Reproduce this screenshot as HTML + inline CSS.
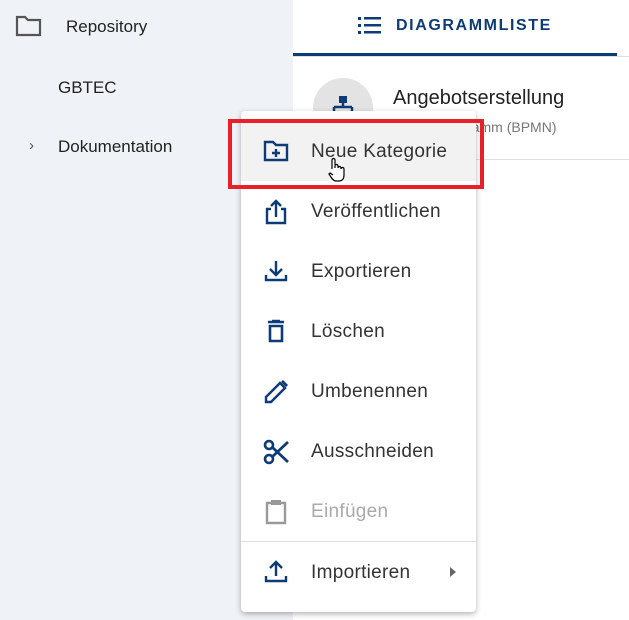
<!DOCTYPE html>
<html><head><meta charset="utf-8"><style>
*{margin:0;padding:0;box-sizing:border-box}
body{width:629px;height:620px;overflow:hidden;position:relative;background:#fff;font-family:"Liberation Sans",sans-serif;color:#222}
.side{position:absolute;left:0;top:0;width:293px;height:620px;background:#eff2f7}
.t{position:absolute;white-space:nowrap}
.menu{position:absolute;left:241px;top:111px;width:235px;height:501px;background:#fff;border-radius:4px;box-shadow:0 2px 6px rgba(0,0,0,.3)}
.item{position:absolute;left:0;width:235px;height:60px}
.item span{position:absolute;left:70px;top:19px;font-size:19px;line-height:24px;color:#333;letter-spacing:.3px}
.item svg{position:absolute;left:22px;top:18px}
</style></head><body>
<div class="side"></div>
<svg style="position:absolute;left:15px;top:15px" width="27" height="22" viewBox="0 0 27 22"><path d="M2 2h8l3 3h12v15H2z" fill="none" stroke="#555" stroke-width="2.2"/></svg>
<div class="t" style="left:66px;top:17px;font-size:17px;color:#222">Repository</div>
<div class="t" style="left:58px;top:78px;font-size:17px;color:#222">GBTEC</div>
<div class="t" style="left:29px;top:137px;font-size:15px;color:#555">›</div>
<div class="t" style="left:58px;top:137px;font-size:17px;color:#222">Dokumentation</div>

<svg style="position:absolute;left:358px;top:16px" width="24" height="20" viewBox="0 0 24 20"><g fill="#0d3b77"><rect x="0" y="1" width="3" height="3"/><rect x="0" y="8" width="3" height="3"/><rect x="0" y="15" width="3" height="3"/><rect x="6" y="1" width="17" height="2.5"/><rect x="6" y="8" width="17" height="2.5"/><rect x="6" y="15" width="17" height="2.5"/></g></svg>
<div class="t" style="left:396px;top:17px;font-size:16px;font-weight:bold;color:#0d3b77;letter-spacing:1.6px">DIAGRAMMLISTE</div>
<div style="position:absolute;left:293px;top:53px;width:324px;height:3px;background:#0d3b77"></div>
<div style="position:absolute;left:293px;top:56px;width:336px;height:1px;background:#e0e0e0"></div>
<div style="position:absolute;left:313px;top:78px;width:60px;height:60px;border-radius:50%;background:#e3e3e3"></div>
<svg style="position:absolute;left:331px;top:96px" width="24" height="20" viewBox="0 0 24 20"><rect x="8" y="0" width="8" height="7" fill="#0d3b77"/><path d="M12 7v4M3 11h18M3 11v9M21 11v9" stroke="#0d3b77" stroke-width="2.5" fill="none"/></svg>
<div class="t" style="left:393px;top:87px;font-size:20px;color:#222">Angebotserstellung</div>
<div class="t" style="left:390px;top:119px;font-size:14px;color:#777">Prozessdiagramm (BPMN)</div>
<div style="position:absolute;left:293px;top:159px;width:336px;height:1px;background:#e0e0e0"></div>

<div class="menu">
<div class="item" style="top:10px;background:#f2f2f2"><svg width="26" height="24" viewBox="0 0 26 24"><path d="M2 3h8l3 3h11v15H2z" fill="none" stroke="#0d3b77" stroke-width="2.4"/><path d="M13 10v8M9 14h8" stroke="#0d3b77" stroke-width="2.4"/></svg><span>Neue Kategorie</span></div>
<div class="item" style="top:70px"><svg width="26" height="26" viewBox="0 0 26 26"><path d="M8 10H4v14h18V10h-4M13 18V2M8 7l5-5 5 5" fill="none" stroke="#0d3b77" stroke-width="2.4"/></svg><span>Veröffentlichen</span></div>
<div class="item" style="top:130px"><svg width="26" height="24" viewBox="0 0 26 24"><path d="M13 2v13M7 10l6 6 6-6M3 16v5h20v-5" fill="none" stroke="#0d3b77" stroke-width="2.4"/></svg><span>Exportieren</span></div>
<div class="item" style="top:190px"><svg width="26" height="24" viewBox="0 0 26 24"><path d="M5 3h16M9 2h8" stroke="#0d3b77" stroke-width="2.4"/><path d="M7 7h12v15H7z" fill="none" stroke="#0d3b77" stroke-width="2.6"/></svg><span>Löschen</span></div>
<div class="item" style="top:250px"><svg width="26" height="26" viewBox="0 0 26 26"><path d="M3 23v-5L17 4l5 5L8 23z" fill="none" stroke="#0d3b77" stroke-width="2.4"/><path d="M18 3l2-2 5 5-2 2z" fill="#0d3b77"/></svg><span>Umbenennen</span></div>
<div class="item" style="top:310px"><svg width="28" height="26" viewBox="0 0 28 26"><circle cx="6" cy="6" r="4" fill="none" stroke="#0d3b77" stroke-width="2.6"/><circle cx="6" cy="20" r="4" fill="none" stroke="#0d3b77" stroke-width="2.6"/><path d="M9 8l16 15M9 18L25 3" stroke="#0d3b77" stroke-width="2.8"/></svg><span>Ausschneiden</span></div>
<div class="item" style="top:370px"><svg width="26" height="26" viewBox="0 0 26 26"><path d="M4 4h18v20H4z" fill="none" stroke="#999" stroke-width="2.4"/><rect x="8" y="1" width="10" height="5" fill="#999"/></svg><span style="color:#aaa">Einfügen</span></div>
<div style="position:absolute;left:0;top:430px;width:235px;height:1px;background:#ddd"></div>
<div class="item" style="top:431px"><svg width="26" height="24" viewBox="0 0 26 24"><path d="M13 16V3M7 8l6-6 6 6M3 16v5h20v-5" fill="none" stroke="#0d3b77" stroke-width="2.4"/></svg><span>Importieren</span><div style="position:absolute;left:209px;top:25px;border-left:6px solid #666;border-top:5px solid transparent;border-bottom:5px solid transparent"></div></div>
</div>
<div style="position:absolute;left:228px;top:119px;width:256px;height:70px;border:4px solid #e8202a"></div>
<svg style="position:absolute;left:327px;top:157px" width="20" height="26" viewBox="0 0 20 26"><path d="M5 12V3a1.5 1.5 0 013 0v8V9a1.5 1.5 0 013 0v2a1.5 1.5 0 013 0v1a1.5 1.5 0 013 0v6c0 4-2 6-5 6h-3c-3 0-5-4-7-7l1-1 3 2" fill="#fff" stroke="#000" stroke-width="1.2"/></svg>
</body></html>
